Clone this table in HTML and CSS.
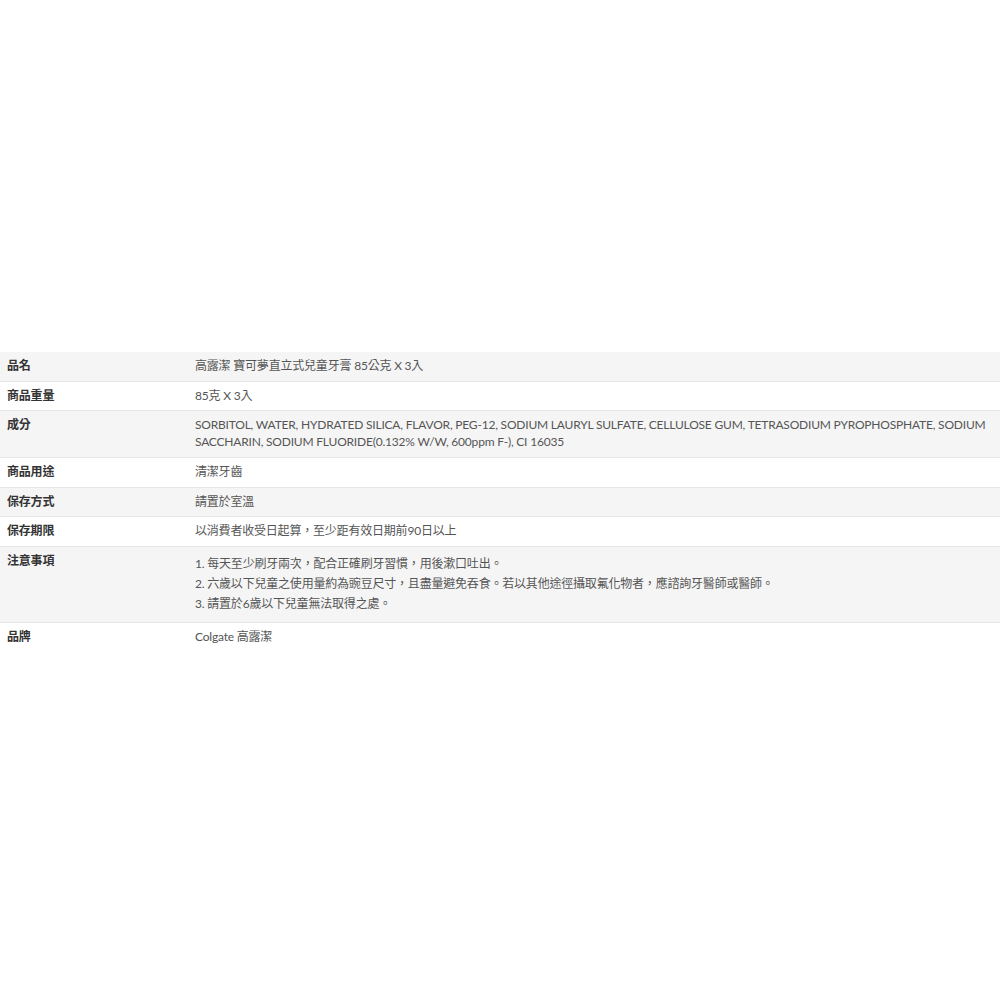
FILE: index.html
```html
<!DOCTYPE html>
<html lang="zh-Hant">
<head>
<meta charset="utf-8">
<link rel="stylesheet" href="styles.css">
</head>
<body>
<div class="page">
  <table class="spec">
    <tr class="odd"><th>品名</th><td>高露潔 寶可夢直立式兒童牙膏 85公克 X 3入</td></tr>
    <tr><th>商品重量</th><td>85克 X 3入</td></tr>
    <tr class="odd"><th>成分</th><td>SORBITOL, WATER, HYDRATED SILICA, FLAVOR, PEG-12, SODIUM LAURYL SULFATE, CELLULOSE GUM, TETRASODIUM PYROPHOSPHATE, SODIUM SACCHARIN, SODIUM FLUORIDE(0.132% W/W, 600ppm F-), CI 16035</td></tr>
    <tr><th>商品用途</th><td>清潔牙齒</td></tr>
    <tr class="odd"><th>保存方式</th><td>請置於室溫</td></tr>
    <tr><th>保存期限</th><td>以消費者收受日起算，至少距有效日期前90日以上</td></tr>
    <tr class="odd"><th>注意事項</th><td><div class="notes"><div>1. 每天至少刷牙兩次，配合正確刷牙習慣，用後漱口吐出。</div><div>2. 六歲以下兒童之使用量約為豌豆尺寸，且盡量避免吞食。若以其他途徑攝取氟化物者，應諮詢牙醫師或醫師。</div><div>3. 請置於6歲以下兒童無法取得之處。</div></div></td></tr>
    <tr class="last"><th>品牌</th><td>Colgate 高露潔</td></tr>
  </table>
</div>
</body>
</html>
```
FILE: styles.css
```css
html, body {
  margin: 0;
  padding: 0;
  background: #fff;
}
.page {
  padding-top: 352px;
}
.spec {
  width: 1000px;
  border-collapse: collapse;
  font-family: Lato, "Noto Sans CJK TC", sans-serif;
  font-size: 12px;
  line-height: 16.7px;
  letter-spacing: -0.2px;
}
.spec tr {
  border-bottom: 1px solid #e6e6e6;
}
.spec tr.last {
  border-bottom: none;
}
.spec tr.odd {
  background: #f5f5f5;
}
.spec th {
  width: 188px;
  text-align: left;
  vertical-align: top;
  font-weight: 700;
  color: #333;
  padding: 6px 0 6px 7px;
}
.spec td {
  vertical-align: top;
  color: #555;
  padding: 6px 0 6px 0;
}
.notes {
  line-height: 20px;
  padding: 1px 0 2px;
}
```
